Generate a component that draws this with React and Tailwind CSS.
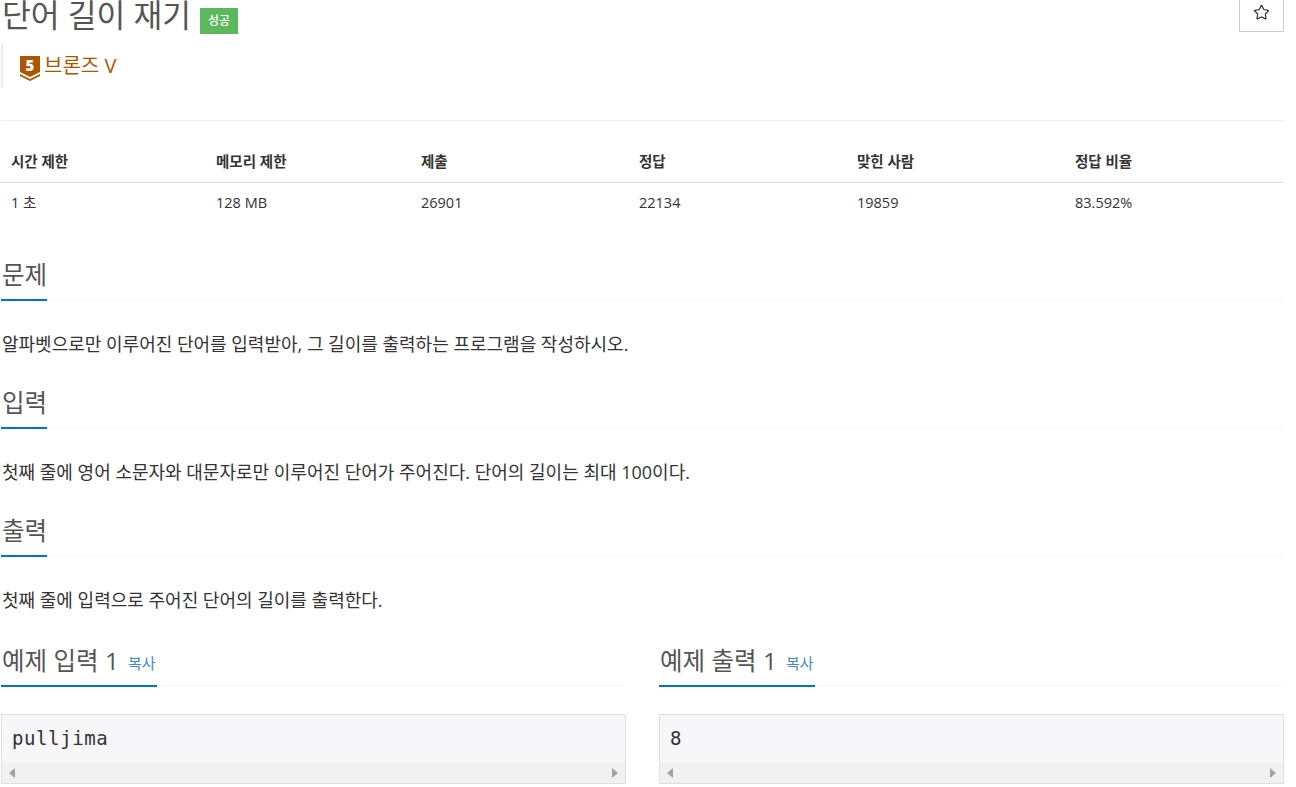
import { Star } from 'lucide-react';

const FONT = { fontFamily: '"Open Sans", "Noto Sans CJK KR", sans-serif' };

const stats = [
  { label: '시간 제한', value: '1 초', width: 'w-[205px]' },
  { label: '메모리 제한', value: '128 MB', width: 'w-[205px]' },
  { label: '제출', value: '26901', width: 'w-[218px]' },
  { label: '정답', value: '22134', width: 'w-[218px]' },
  { label: '맞힌 사람', value: '19859', width: 'w-[218px]' },
  { label: '정답 비율', value: '83.592%', width: 'flex-1' },
];

function Headline({ children, copy }) {
  return (
    <div className="border-b border-dotted border-[#eeeeee] h-[41px] flex">
      <div className="h-[42px] border-b-2 border-[#0076c0] flex items-start gap-[9px] text-[24.5px] leading-[32px] text-[#555555]">
        <h2 className="pl-px font-normal">{children}</h2>
        {copy && <a className="text-[15px] text-[#428bca] mt-[2px] pr-px">복사</a>}
      </div>
    </div>
  );
}

function Section({ title, text }) {
  return (
    <section className="h-[128px]">
      <Headline>{title}</Headline>
      <p className="mt-[32px] pl-px text-[18px] leading-[24px] text-[#333333]">{text}</p>
    </section>
  );
}

function Arrow({ right }) {
  return (
    <svg width="6" height="10" viewBox="0 0 6 10" className="text-[#a3a3a3]">
      <path d={right ? 'M0 0 L6 5 L0 10 Z' : 'M6 0 L0 5 L6 10 Z'} fill="currentColor" />
    </svg>
  );
}

function Sample({ title, value }) {
  return (
    <div className="flex-1">
      <Headline copy>{title}</Headline>
      <div className="mt-[28px] h-[70px] border border-[#dfdfe3] bg-[#f7f7f9] flex flex-col">
        <pre
          className="flex-1 pl-[10px] pt-[9px] text-[19px] leading-[28px] tracking-[0.6px] text-[#333333]"
          style={{ fontFamily: '"DejaVu Sans Mono", monospace' }}
        >
          {value}
        </pre>
        <div className="h-[21px] bg-[#f1f1f1] flex items-center justify-between px-[7px]">
          <Arrow />
          <Arrow right />
        </div>
      </div>
    </div>
  );
}

export default function App() {
  return (
    <div style={FONT} className="w-[1296px] h-[787px] overflow-hidden bg-white pl-px pr-[12px]">
      <div className="relative h-[44px]">
        <div className="flex items-start pl-px">
          <h1 className="text-[31.3px] leading-[30px] font-normal text-[#555555]">단어 길이 재기</h1>
          <span className="ml-[9px] mt-[8px] w-[38px] h-[26px] bg-[#5cb85c] text-white text-[12px] font-medium flex items-center justify-center">
            성공
          </span>
        </div>
        <button className="absolute right-0 -top-px w-[45px] h-[33px] border border-[#cccccc] bg-white flex items-center justify-center text-[#333333]">
          <Star size={17} strokeWidth={1.7} className="-mt-[7px]" />
        </button>
      </div>

      <div className="h-[44px] border-l-2 border-[#eeeeee] pl-[17px] flex items-center gap-[4px]">
        <svg width="20" height="25" viewBox="0 0 20 25" className="mt-[5px]">
          <path d="M0 0 H20 V16 L10 21 L0 16 Z" fill="#ad5600" />
          <path d="M0 18 L10 23 L20 18 V20 L10 25 L0 20 Z" fill="#ad5600" />
          <text x="10" y="15" textAnchor="middle" fontSize="15" fontWeight="800" fill="#ffffff">5</text>
        </svg>
        <span className="text-[20px] leading-[28px] text-[#ad5600] -mt-[1px]">브론즈 V</span>
      </div>

      <div className="mt-[32px] border-t border-[#eeeeee] pt-[20px]">
        <div className="flex h-[42px] border-b border-[#dddddd] text-[14.5px] font-bold text-[#333333]">
          {stats.map((s) => (
            <div key={s.label} className={`${s.width} pl-[10px] pt-[11px] leading-[20px]`}>{s.label}</div>
          ))}
        </div>
        <div className="flex h-[40px] text-[14.5px] text-[#333333]">
          {stats.map((s) => (
            <div key={s.label} className={`${s.width} pl-[10px] pt-[10px] leading-[20px]`}>{s.value}</div>
          ))}
        </div>
      </div>

      <div className="mt-[36px]">
        <Section title="문제" text="알파벳으로만 이루어진 단어를 입력받아, 그 길이를 출력하는 프로그램을 작성하시오." />
        <Section title="입력" text="첫째 줄에 영어 소문자와 대문자로만 이루어진 단어가 주어진다. 단어의 길이는 최대 100이다." />
        <Section title="출력" text="첫째 줄에 입력으로 주어진 단어의 길이를 출력한다." />
      </div>

      <div className="flex gap-[33px] mt-[2px]">
        <Sample title="예제 입력 1" value="pulljima" />
        <Sample title="예제 출력 1" value="8" />
      </div>
    </div>
  );
}
